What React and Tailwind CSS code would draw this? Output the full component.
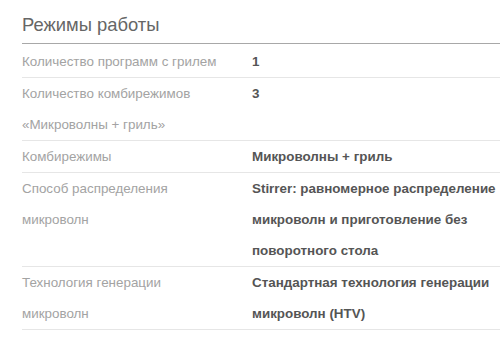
export default function App() {
  const rows = [
    { label: "Количество программ с грилем", value: "1", first: true },
    { label: "Количество комбирежимов «Микроволны + гриль»", value: "3" },
    { label: "Комбирежимы", value: "Микроволны + гриль" },
    {
      label: "Способ распределения микроволн",
      value: "Stirrer: равномерное распределение микроволн и приготовление без поворотного стола",
    },
    {
      label: "Технология генерации микроволн",
      value: "Стандартная технология генерации микроволн (HTV)",
    },
  ];
  return (
    <div className="w-[500px] h-[340px] bg-white overflow-hidden pl-[22px] font-['Liberation_Sans',Arial,sans-serif]">
      <h2 className="pt-[15px] pb-[9px] text-[18.4px] leading-[19px] text-[#666] border-b border-[#a8a8a8]">
        Режимы работы
      </h2>
      {rows.map((r, i) => (
        <div
          key={i}
          className={
            "flex border-b border-[#e6e6e6] text-[13.4px] leading-[31px] " +
            (r.first ? "pt-[2px]" : "")
          }
        >
          <div className="w-[230px] shrink-0 pr-[26px] text-[#a3a3a3]">{r.label}</div>
          <div className="flex-1 font-bold text-[#555]">{r.value}</div>
        </div>
      ))}
    </div>
  );
}
